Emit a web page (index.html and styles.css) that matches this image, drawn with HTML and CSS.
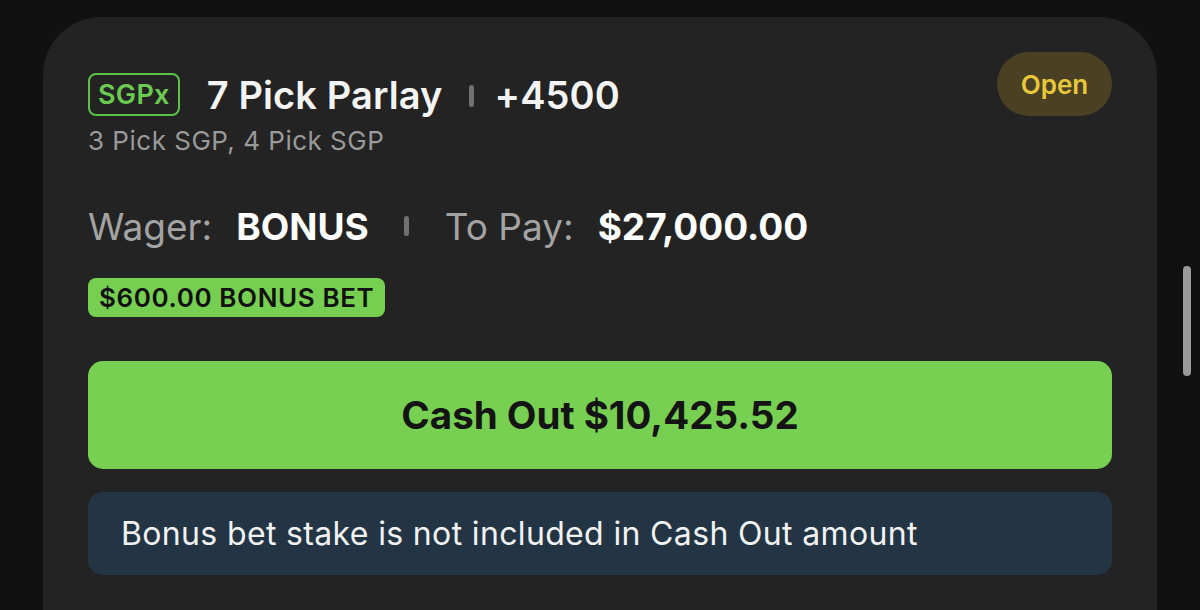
FILE: index.html
```html
<!DOCTYPE html>
<html lang="en">
<head>
<meta charset="utf-8">
<title>Bet</title>
<link rel="stylesheet" href="styles.css">
</head>
<body>
<div class="page">
  <div class="card">
    <div class="header">
      <div class="head-left">
        <div class="title-row">
          <span class="sgpx">SGPx</span>
          <span class="title">7 Pick Parlay</span>
          <span class="sep"></span>
          <span class="title">+4500</span>
        </div>
        <div class="subtitle">3 Pick SGP, 4 Pick SGP</div>
      </div>
      <span class="status">Open</span>
    </div>
    <div class="wager-row">
      <span class="label">Wager:</span>
      <span class="value">BONUS</span>
      <span class="sep small"></span>
      <span class="label">To Pay:</span>
      <span class="value">$27,000.00</span>
    </div>
    <div class="bonus-badge">$600.00 BONUS BET</div>
    <button class="cashout">Cash Out $10,425.52</button>
    <div class="info">Bonus bet stake is not included in Cash Out amount</div>
  </div>
  <div class="scrollbar"></div>
</div>
</body>
</html>
```

FILE: styles.css
```css
html, body {
  margin: 0;
  padding: 0;
  background: #111111;
  height: 100%;
  overflow: hidden;
}
body {
  font-family: Inter, "Noto Sans", sans-serif;
  color: #ffffff;
}
.page {
  position: relative;
  padding: 17px 0 0 43px;
}
.card {
  width: 1114px;
  min-height: 700px;
  box-sizing: border-box;
  background: #232323;
  border-radius: 58px;
  padding: 35px 45px 0 45px;
}
.header {
  display: flex;
  justify-content: space-between;
  align-items: flex-start;
}
.head-left {
  padding-top: 21px;
}
.title-row {
  display: flex;
  align-items: center;
  height: 43px;
}
.sgpx {
  box-sizing: border-box;
  height: 43px;
  display: flex;
  align-items: center;
  padding: 0 8px;
  border: 2px solid #5cc04a;
  border-radius: 8px;
  color: #6bcb50;
  font-size: 27px;
  font-weight: 600;
  letter-spacing: 0.3px;
  margin-right: 27px;
}
.title {
  font-size: 38px;
  font-weight: 600;
  letter-spacing: 0.1px;
  color: #f4f4f4;
}
.sep {
  display: inline-block;
  width: 5px;
  height: 22px;
  border-radius: 3px;
  background: #707070;
  margin: 2px 21px 0 26px;
}
.sep.small {
  height: 20px;
  margin: 0 36px 0 35px;
}
.subtitle {
  margin-top: 9px;
  font-size: 26px;
  line-height: 31px;
  letter-spacing: 0.5px;
  color: #9a9a9a;
}
.status {
  height: 64px;
  width: 115px;
  display: flex;
  align-items: center;
  justify-content: center;
  border-radius: 32px;
  background: #4a4125;
  color: #e8c83b;
  font-size: 26px;
  font-weight: 600;
}
.wager-row {
  display: flex;
  align-items: center;
  margin-top: 48px;
  height: 44px;
}
.label {
  font-size: 37px;
  font-weight: 400;
  color: #a3a3a3;
  margin-right: 24px;
}
.value {
  font-size: 37px;
  font-weight: 700;
  color: #ffffff;
}
.bonus-badge {
  display: flex;
  align-items: center;
  width: fit-content;
  height: 39px;
  margin-top: 30px;
  padding: 0 11px;
  border-radius: 8px;
  background: #76cf51;
  color: #111111;
  font-size: 26px;
  font-weight: 600;
  letter-spacing: 0.6px;
}
.cashout {
  display: flex;
  align-items: center;
  justify-content: center;
  width: 100%;
  height: 108px;
  margin-top: 44px;
  border: none;
  border-radius: 15px;
  background: #77d052;
  color: #141414;
  font-family: Inter, "Noto Sans", sans-serif;
  font-size: 38.5px;
  font-weight: 700;
  cursor: pointer;
}
.info {
  display: flex;
  align-items: center;
  height: 83px;
  margin-top: 23px;
  padding: 0 33px;
  border-radius: 15px;
  background: #233545;
  color: #f2f2f2;
  font-size: 32px;
  font-weight: 400;
  letter-spacing: 0.35px;
}
.scrollbar {
  position: absolute;
  left: 1183px;
  top: 266px;
  width: 8px;
  height: 110px;
  border-radius: 4px;
  background: #9a9a9a;
}
```
